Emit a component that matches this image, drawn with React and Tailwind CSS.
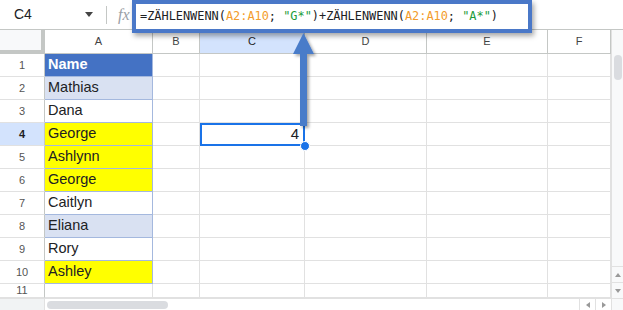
import React from "react";

const cols = [
  { key: "A", w: 108 },
  { key: "B", w: 47 },
  { key: "C", w: 105 },
  { key: "D", w: 122 },
  { key: "E", w: 121 },
  { key: "F", w: 63 },
];

const names = ["Name", "Mathias", "Dana", "George", "Ashlynn", "George", "Caitlyn", "Eliana", "Rory", "Ashley", ""];

const fills = {
  0: "bg-[#4472c4] text-white font-bold",
  1: "bg-[#d9e1f2]",
  3: "bg-[#ffff00]",
  4: "bg-[#ffff00]",
  5: "bg-[#ffff00]",
  7: "bg-[#d9e1f2]",
  9: "bg-[#ffff00]",
};

const Formula = () => (
  <span className="whitespace-pre">
    =ZÄHLENWENN(<span className="text-[#f39c2b]">A2:A10</span>; <span className="text-[#1b9b3a]">"G*"</span>)+ZÄHLENWENN(<span className="text-[#f39c2b]">A2:A10</span>; <span className="text-[#1b9b3a]">"A*"</span>)
  </span>
);

export default function App() {
  return (
    <div className="relative w-[623px] h-[310px] overflow-hidden bg-white text-[#202124] font-['Liberation_Sans',Arial,sans-serif]">
      {/* formula bar */}
      <div className="h-[30px] flex items-center border-b border-[#c4c7c5]">
        <div className="w-[106px] flex items-center justify-between pl-[14px] pr-[13px] text-[14px]">
          <span>C4</span>
          <span className="w-0 h-0 border-l-[4px] border-r-[4px] border-t-[5px] border-l-transparent border-r-transparent border-t-[#444]" />
        </div>
        <div className="w-px h-[18px] bg-[#c4c7c5]" />
        <span className="ml-[11px] text-[16px] italic text-[#9aa0a6] font-['Liberation_Serif',serif]">fx</span>
      </div>

      <div className="flex h-[268px]">
        {/* sheet grid */}
        <div className="grid w-[611px] grid-cols-[45px_108px_47px_105px_122px_121px_63px] grid-rows-[24px_repeat(10,23px)_14px]">
          <div className="bg-[#f8f9fa] border-r-[4px] border-b-[4px] border-[#c4c7c5]" />
          {cols.map((c) => (
            <div
              key={c.key}
              className={`flex items-center justify-center text-[11px] border-b border-r border-[#c4c7c5] ${
                c.key === "C" ? "bg-[#d3e3fd] text-[#1f1f1f]" : "text-[#444]"
              }`}
            >
              {c.key}
            </div>
          ))}

          {names.map((n, i) => (
            <React.Fragment key={i}>
              <div
                className={`flex items-center justify-center text-[11px] border-r border-r-[#c4c7c5] border-b border-b-[#e1e1e1] ${
                  i === 3 ? "bg-[#d3e3fd] font-bold text-[#1f1f1f]" : "text-[#555]"
                }`}
              >
                {i + 1}
              </div>
              <div
                className={`flex items-center pl-[3px] text-[14.5px] border-r border-b ${
                  i < 10 ? "border-[#a4b8de]" : "border-[#e1e1e1]"
                } ${fills[i] || ""}`}
              >
                {n}
              </div>
              <div className="border-r border-b border-[#e1e1e1]" />
              {i === 3 ? (
                <div className="flex items-center justify-end pr-[4px] text-[15px] border-2 border-[#1a73e8]">4</div>
              ) : (
                <div className="border-r border-b border-[#e1e1e1]" />
              )}
              <div className="border-r border-b border-[#e1e1e1]" />
              <div className="border-r border-b border-[#e1e1e1]" />
              <div className="border-r border-b border-[#e1e1e1]" />
            </React.Fragment>
          ))}
        </div>

        {/* vertical scrollbar */}
        <div className="w-[12px] flex flex-col bg-[#f8f9fa] border-l border-[#e1e1e1]">
          <div className="mt-[25px] mx-auto w-[8px] h-[25px] rounded-full bg-[#dadce0]" />
          <div className="flex-1" />
          <div className="h-[16px] flex items-center justify-center border-t border-[#e1e1e1]">
            <span className="w-0 h-0 border-l-[3px] border-r-[3px] border-b-[4px] border-l-transparent border-r-transparent border-b-[#999]" />
          </div>
          <div className="h-[16px] flex items-center justify-center border-t border-[#e1e1e1]">
            <span className="w-0 h-0 border-l-[3px] border-r-[3px] border-t-[4px] border-l-transparent border-r-transparent border-t-[#999]" />
          </div>
        </div>
      </div>

      {/* horizontal scrollbar */}
      <div className="h-[12px] flex border-t border-[#e1e1e1]">
        <div className="w-[45px] bg-[#f1f3f4] border-r border-[#e1e1e1]" />
        <div className="flex-1 relative flex items-center">
          <div className="ml-[2px] w-[121px] h-[8px] rounded-full bg-[#dadce0]" />
        </div>
        <div className="w-[16px] flex items-center justify-center border-l border-[#e1e1e1]">
          <span className="w-0 h-0 border-t-[3px] border-b-[3px] border-r-[4px] border-t-transparent border-b-transparent border-r-[#999]" />
        </div>
        <div className="w-[16px] flex items-center justify-center border-l border-[#e1e1e1]">
          <span className="w-0 h-0 border-t-[3px] border-b-[3px] border-l-[4px] border-t-transparent border-b-transparent border-l-[#999]" />
        </div>
        <div className="w-[12px] bg-[#f8f9fa] border-l border-[#e1e1e1]" />
      </div>

      {/* highlighted formula */}
      <div className="absolute left-[132px] top-0 w-[400px] h-[33px] border-[4px] border-[#4a78c8] bg-white shadow-[2px_3px_5px_rgba(0,0,0,0.35)] flex items-center pl-[4px] text-[11.9px] text-[#202124] font-['DejaVu_Sans_Mono',monospace]">
        <Formula />
      </div>

      {/* arrow + fill handle */}
      <svg className="absolute left-0 top-0 pointer-events-none" width="623" height="310">
        <defs>
          <filter id="sh" x="-50%" y="-50%" width="200%" height="200%">
            <feDropShadow dx="2" dy="2" stdDeviation="1.5" floodColor="#000" floodOpacity="0.35" />
          </filter>
        </defs>
        <g filter="url(#sh)" fill="#4a7bc9">
          <rect x="300" y="52" width="7" height="74" />
          <polygon points="293,54 303.5,33 314,54" />
        </g>
        <circle cx="305" cy="146" r="4.5" fill="#1a73e8" stroke="#fff" strokeWidth="1" />
      </svg>
    </div>
  );
}
